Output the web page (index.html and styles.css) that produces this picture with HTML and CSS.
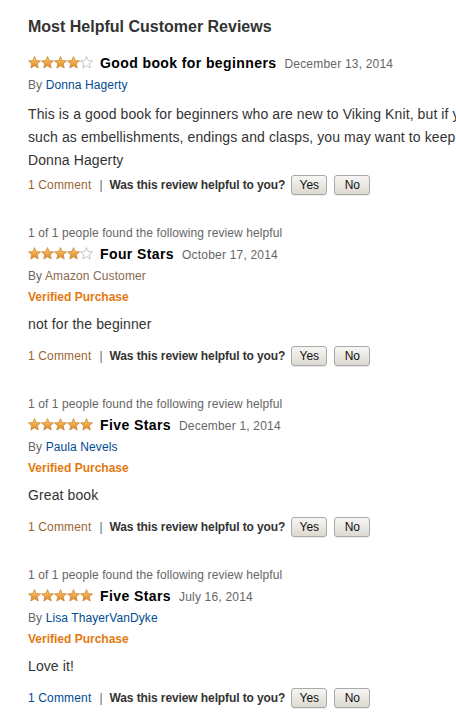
FILE: index.html
```html
<!DOCTYPE html>
<html>
<head>
<meta charset="utf-8">
<link rel="stylesheet" href="styles.css">
</head>
<body>
<svg width="0" height="0" class="defs">
  <defs>
    <linearGradient id="gold" x1="0" y1="0" x2="0" y2="1">
      <stop offset="0" stop-color="#fbd27a"/>
      <stop offset="0.55" stop-color="#eea546"/>
      <stop offset="1" stop-color="#d9822b"/>
    </linearGradient>
    <symbol id="star" viewBox="0 0 13 13">
      <polygon points="6.5,0.6 8.2,4.6 12.5,4.9 9.2,7.7 10.2,12 6.5,9.7 2.8,12 3.8,7.7 0.5,4.9 4.8,4.6" fill="url(#gold)" stroke="#c98633" stroke-width="0.8" stroke-linejoin="round"/>
    </symbol>
    <symbol id="star-empty" viewBox="0 0 13 13">
      <polygon points="6.5,0.6 8.2,4.6 12.5,4.9 9.2,7.7 10.2,12 6.5,9.7 2.8,12 3.8,7.7 0.5,4.9 4.8,4.6" fill="#fff" stroke="#b5b5b5" stroke-width="0.8" stroke-linejoin="round"/>
    </symbol>
  </defs>
</svg>
<div class="page">
  <h2 class="heading">Most Helpful Customer Reviews</h2>

  <div class="review first">
    <div class="title-row">
      <span class="stars">
        <svg class="s"><use href="#star"/></svg><svg class="s"><use href="#star"/></svg><svg class="s"><use href="#star"/></svg><svg class="s"><use href="#star"/></svg><svg class="s"><use href="#star-empty"/></svg>
      </span>
      <span class="rtitle">Good book for beginners</span>
      <span class="date">December 13, 2014</span>
    </div>
    <div class="by">By <span class="author">Donna Hagerty</span></div>
    <div class="text">This is a good book for beginners who are new to Viking Knit, but if you are looking for more advanced techniques<br>such as embellishments, endings and clasps, you may want to keep looking.<br>Donna Hagerty</div>
    <div class="footer">
      <span class="comment visited">1 Comment</span>
      <span class="sep">|</span>
      <span class="ask">Was this review helpful to you?</span>
      <span class="btn">Yes</span>
      <span class="btn">No</span>
    </div>
  </div>

  <div class="review">
    <div class="helpful">1 of 1 people found the following review helpful</div>
    <div class="title-row">
      <span class="stars">
        <svg class="s"><use href="#star"/></svg><svg class="s"><use href="#star"/></svg><svg class="s"><use href="#star"/></svg><svg class="s"><use href="#star"/></svg><svg class="s"><use href="#star-empty"/></svg>
      </span>
      <span class="rtitle">Four Stars</span>
      <span class="date">October 17, 2014</span>
    </div>
    <div class="by">By <span class="author visited">Amazon Customer</span></div>
    <div class="verified">Verified Purchase</div>
    <div class="text">not for the beginner</div>
    <div class="footer">
      <span class="comment visited">1 Comment</span>
      <span class="sep">|</span>
      <span class="ask">Was this review helpful to you?</span>
      <span class="btn">Yes</span>
      <span class="btn">No</span>
    </div>
  </div>

  <div class="review">
    <div class="helpful">1 of 1 people found the following review helpful</div>
    <div class="title-row">
      <span class="stars">
        <svg class="s"><use href="#star"/></svg><svg class="s"><use href="#star"/></svg><svg class="s"><use href="#star"/></svg><svg class="s"><use href="#star"/></svg><svg class="s"><use href="#star"/></svg>
      </span>
      <span class="rtitle">Five Stars</span>
      <span class="date">December 1, 2014</span>
    </div>
    <div class="by">By <span class="author">Paula Nevels</span></div>
    <div class="verified">Verified Purchase</div>
    <div class="text">Great book</div>
    <div class="footer">
      <span class="comment visited">1 Comment</span>
      <span class="sep">|</span>
      <span class="ask">Was this review helpful to you?</span>
      <span class="btn">Yes</span>
      <span class="btn">No</span>
    </div>
  </div>

  <div class="review">
    <div class="helpful">1 of 1 people found the following review helpful</div>
    <div class="title-row">
      <span class="stars">
        <svg class="s"><use href="#star"/></svg><svg class="s"><use href="#star"/></svg><svg class="s"><use href="#star"/></svg><svg class="s"><use href="#star"/></svg><svg class="s"><use href="#star"/></svg>
      </span>
      <span class="rtitle">Five Stars</span>
      <span class="date">July 16, 2014</span>
    </div>
    <div class="by">By <span class="author">Lisa ThayerVanDyke</span></div>
    <div class="verified">Verified Purchase</div>
    <div class="text">Love it!</div>
    <div class="footer">
      <span class="comment">1 Comment</span>
      <span class="sep">|</span>
      <span class="ask">Was this review helpful to you?</span>
      <span class="btn">Yes</span>
      <span class="btn">No</span>
    </div>
  </div>
</div>
</body>
</html>
```
FILE: styles.css
```css
html, body {
  margin: 0;
  padding: 0;
  overflow: hidden;
  background: #fff;
}
body {
  font-family: "Liberation Sans", Arial, sans-serif;
  color: #333;
}
.defs {
  position: absolute;
  width: 0;
  height: 0;
}
.page {
  padding: 17px 0 0 28px;
  width: 700px;
}
.heading {
  margin: 0 0 17px 0;
  font-size: 16px;
  font-weight: bold;
  color: #333;
  line-height: 20px;
}
.review {
  margin-bottom: 30px;
}
.helpful {
  font-size: 12px;
  letter-spacing: 0.1px;
  color: #666;
  line-height: 16px;
  margin-bottom: 4px;
}
.title-row {
  display: flex;
  align-items: center;
  height: 18px;
}
.stars {
  display: flex;
  gap: 0;
  margin-right: 7px;
  margin-top: -2px;
}
.s {
  width: 13px;
  height: 13px;
  display: block;
}
.rtitle {
  font-size: 14px;
  font-weight: bold;
  letter-spacing: 0.4px;
  color: #000;
  margin-right: 8px;
}
.date {
  font-size: 12px;
  letter-spacing: 0.2px;
  color: #666;
  margin-top: 2px;
}
.by {
  font-size: 12px;
  letter-spacing: 0.1px;
  color: #666;
  line-height: 16px;
  margin-top: 5px;
}
.author {
  color: #004b91;
}
.author.visited {
  color: #8a6a50;
}
.verified {
  font-size: 12px;
  font-weight: bold;
  color: #e47911;
  line-height: 16px;
  margin-top: 5px;
}
.text {
  font-size: 14px;
  letter-spacing: 0.1px;
  line-height: 23px;
  color: #333;
  margin-top: 8px;
  white-space: nowrap;
}
.first .text {
  margin-top: 10px;
}
.footer {
  display: flex;
  align-items: center;
  margin-top: 10px;
  font-size: 12px;
  height: 20px;
}
.first .footer {
  margin-top: 3px;
}
.comment {
  color: #004b91;
  letter-spacing: 0.15px;
}
.comment.visited {
  color: #996633;
}
.sep {
  color: #666;
  margin: 0 7px 0 8px;
}
.ask {
  font-weight: bold;
  letter-spacing: -0.1px;
  color: #333;
  margin-right: 6px;
}
.btn {
  display: inline-block;
  box-sizing: border-box;
  width: 36px;
  height: 20px;
  line-height: 18px;
  text-align: center;
  font-size: 12px;
  color: #111;
  border: 1px solid #a9a9a9;
  border-radius: 3px;
  background: linear-gradient(#f7f6f3, #dcd9d1);
  margin-right: 7px;
  box-shadow: 0 1px 0 rgba(0,0,0,0.08);
}
```
